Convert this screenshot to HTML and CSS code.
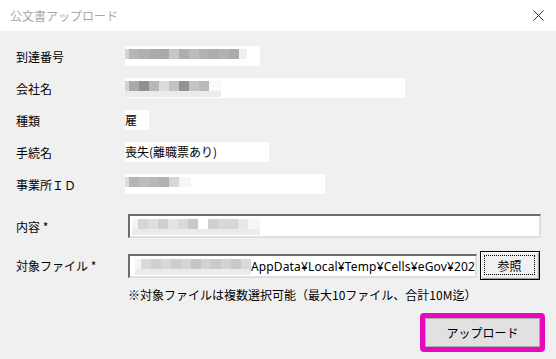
FILE: index.html
```html
<!DOCTYPE html>
<html lang="ja">
<head>
    <meta charset="UTF-8">
    <title>公文書アップロード</title>
    <link rel="stylesheet" href="styles.css">
</head>
<body>
    <div class="titlebar">
        <span class="title">公文書アップロード</span>
        <svg class="close" width="11" height="11" viewBox="0 0 11 11">
            <path d="M0.5 0.5 L10.5 10.5 M10.5 0.5 L0.5 10.5" stroke="#333" stroke-width="1" fill="none"/>
        </svg>
    </div>

    <div class="content">
        <div class="info-row">
            <div class="label">到達番号</div>
            <div class="value w135">
                <span class="blur">
                    <i style="background:#d8d4d0;width:4px"></i><i style="background:#b4b6b9"></i><i style="background:#b2b1af"></i><i style="background:#acabaa"></i><i style="background:#a9a9a9"></i><i style="background:#c8c7c5"></i><i style="background:#b0adaa"></i><i style="background:#babdc0"></i><i style="background:#b3b1ad"></i><i style="background:#aeadac"></i><i style="background:#b3b2b0"></i><i style="background:#acabab"></i><i style="background:#eef1f4;width:8px"></i>
                </span>
            </div>
        </div>
        <div class="info-row">
            <div class="label">会社名</div>
            <div class="value w280">
                <span class="blur two">
                    <i style="background:#d6d2ce;width:4px"></i><i style="background:#a9a9a9"></i><i style="background:#8f8f8f"></i><i style="background:#b8b8b8"></i><i style="background:#dcdcdc"></i><i style="background:#c5c1bc"></i><i style="background:#929292"></i><i style="background:#c4c4c4"></i><i style="background:#b9b9bc"></i><i style="background:#fafafa;width:12px"></i>
                </span>
            </div>
        </div>
        <div class="info-row">
            <div class="label">種類</div>
            <div class="value w24">雇</div>
        </div>
        <div class="info-row">
            <div class="label">手続名</div>
            <div class="value w144">喪失(離職票あり)</div>
        </div>
        <div class="info-row">
            <div class="label">事業所ＩＤ</div>
            <div class="value w200">
                <span class="blur">
                    <i style="background:#dcdcdc;width:4px"></i><i style="background:#b5b5b5"></i><i style="background:#bdbdbd"></i><i style="background:#b7b7b7"></i><i style="background:#b2b2b2"></i><i style="background:#d6d5dc"></i><i style="background:#f6f6f6;width:12px"></i>
                </span>
            </div>
        </div>

        <div class="input-row">
            <div class="label wide">内容 *</div>
            <div class="field w413">
                <span class="blur two">
                    <i style="background:#f4f4f4;width:6px"></i><i style="background:#d6d6d4"></i><i style="background:#dcdfe2"></i><i style="background:#cfcfcf"></i><i style="background:#e4e4e4"></i><i style="background:#dadada"></i><i style="background:#c8c8c8"></i><i style="background:#ffffff"></i><i style="background:#d0d0d0"></i><i style="background:#d8d8d8"></i><i style="background:#d6d6d6"></i><i style="background:#e5e8ea"></i><i style="background:#f6f6f6;width:12px"></i>
                </span>
            </div>
        </div>

        <div class="file-row">
            <div class="label wide">対象ファイル *</div>
            <div class="field w349 scrolled">
                <span class="blur two">
                    <i style="background:#f4f4f4;width:6px"></i><i style="background:#dadada"></i><i style="background:#cfcfcf"></i><i style="background:#d8d8d8"></i><i style="background:#cdcdcd"></i><i style="background:#d4d4d4"></i><i style="background:#c6c6c6"></i><i style="background:#d2d2d2"></i><i style="background:#cbc9cc"></i><i style="background:#d3d3d3"></i><i style="background:#c9c9c9"></i><i style="background:#d9d9d9"></i>
                </span><span class="path">AppData¥Local¥Temp¥Cells¥eGov¥202</span>
            </div>
            <button class="browse"><span>参照</span></button>
        </div>

        <div class="note">※対象ファイルは複数選択可能（最大10ファイル、合計10M迄）</div>

        <div class="actions">
            <div class="highlight">
                <button class="upload">アップロード</button>
            </div>
        </div>
    </div>
</body>
</html>
```

FILE: styles.css
```css
body {
    margin: 0;
    width: 556px;
    height: 359px;
    background-color: #f0f0f0;
    font-family: "Noto Sans CJK JP", "Noto Sans", sans-serif;
    font-size: 12px;
    color: #000;
    overflow: hidden;
}
.titlebar {
    height: 31px;
    background-color: #fff;
    display: flex;
    align-items: center;
    justify-content: space-between;
    padding: 0 10px 0 10px;
}
.title {
    color: #a8a8a8;
    font-size: 12px;
}
.close {
    margin-right: 2px;
}
.content {
    padding: 15px 11px 0 16px;
}
.info-row {
    display: flex;
    align-items: center;
    height: 20px;
    margin-bottom: 12px;
}
.label {
    width: 109px;
    flex: none;
}
.label.wide {
    width: 112px;
}
.value {
    height: 20px;
    background-color: #fff;
    display: flex;
    align-items: center;
    overflow: hidden;
    white-space: nowrap;
    line-height: 20px;
}
.w24 { width: 24px; }
.w135 { width: 135px; }
.w144 { width: 144px; }
.w200 { width: 200px; }
.w280 { width: 280px; }
.w349 { width: 349px; }
.w413 { width: 413px; }

.blur {
    display: flex;
    height: 10px;
    align-self: flex-start;
    margin-top: 3px;
}
.blur i {
    display: block;
    width: 10px;
    height: 10px;
}
.blur.two {
    height: 10px;
    box-shadow: 0 6px 0 0 #ebebeb;
}

.input-row {
    display: flex;
    align-items: center;
    margin-top: 20px;
}
.field {
    height: 24px;
    box-sizing: border-box;
    background-color: #fff;
    border-top: 2px solid #6d6d6d;
    border-left: 2px solid #6d6d6d;
    border-right: 1px solid #dcdcdc;
    border-bottom: 1px solid #dcdcdc;
    box-shadow: inset -1px -1px 0 #e3e3e3;
    display: flex;
    align-items: center;
    overflow: hidden;
    white-space: nowrap;
    padding-left: 2px;
}
.field .blur {
    margin-top: 3px;
}
.scrolled {
    justify-content: flex-end;
    padding-left: 0;
    padding-right: 1px;
}
.scrolled .blur {
    flex: none;
}
.path {
    font-family: "Noto Sans", sans-serif;
    font-size: 12px;
    letter-spacing: 0.15px;
    flex: none;
}

.file-row {
    display: flex;
    align-items: center;
    margin-top: 13px;
    height: 29px;
}
.browse {
    margin-left: 3px;
    width: 60px;
    height: 29px;
    padding: 2px;
    background-color: #f0f0f0;
    border: 1px solid #000;
    box-shadow: inset 1px 1px 0 #fff, inset -1px -1px 0 #a0a0a0, inset -2px -2px 0 #e0e0e0;
    font-family: "Noto Sans CJK JP", sans-serif;
    font-size: 12px;
    color: #000;
    display: flex;
}
.browse span {
    flex: 1;
    border: 1px dotted #000;
    display: flex;
    align-items: center;
    justify-content: center;
    margin: 1px 2px 2px 1px;
}

.note {
    margin-top: 7px;
    margin-left: 112px;
    line-height: 16px;
}

.actions {
    display: flex;
    justify-content: flex-end;
    margin-top: 10px;
}
.highlight {
    border: 5px solid #e60abf;
    border-radius: 4px;
    display: flex;
}
.upload {
    width: 115px;
    height: 29px;
    background-color: #e1e1e1;
    border: 1px solid #adadad;
    font-family: "Noto Sans CJK JP", sans-serif;
    font-size: 12px;
    color: #000;
    padding: 0;
}
```
